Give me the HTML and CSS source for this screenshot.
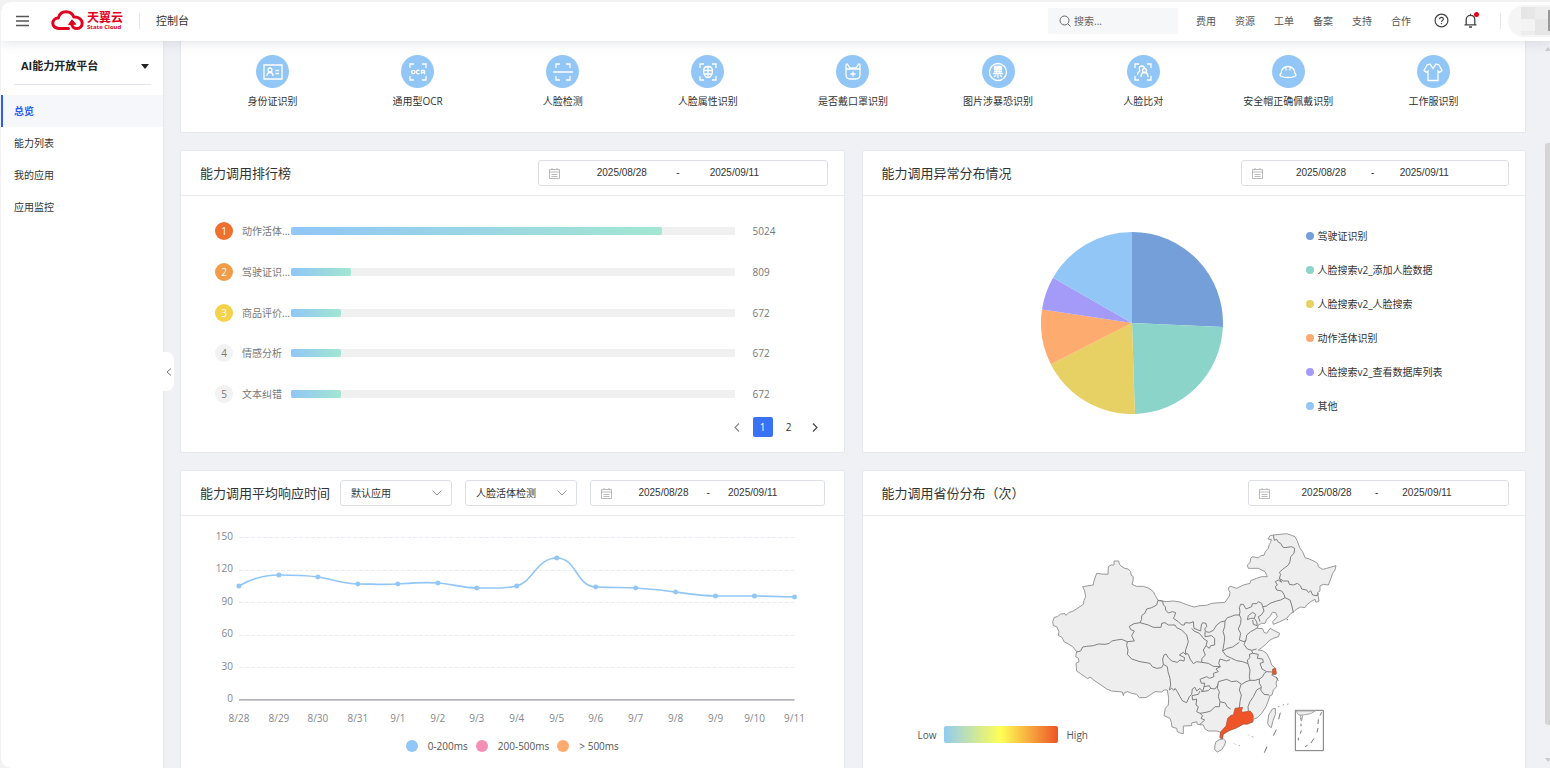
FILE: index.html
```
<!DOCTYPE html>
<html lang="zh-CN">
<head>
    <meta charset="UTF-8">
    <meta name="viewport" content="width=device-width, initial-scale=1.0">
    <title>AI能力开放平台 - 总览</title>
    <link rel="stylesheet" href="styles.css">
</head>
<body>
    <div class="app">
        <header class="header">
            <button class="menu-btn" aria-label="菜单">
                <svg width="13" height="12" viewBox="0 0 13 12" stroke="#555" stroke-width="1.6"><path d="M0 1.500h13M0 6h13M0 10.500h13"/></svg>
            </button>
            <a class="logo" href="#">
                <svg width="33" height="21" viewBox="0 0 33 21" fill="none" stroke="#e2001f" stroke-width="3" stroke-linecap="round" stroke-linejoin="round">
                    <path d="M17.500 18.500H8C4.500 18.500 1.800 16.300 1.800 13.300c0-3 2.300-5 5.400-5.200C8.300 4.200 11.400 1.800 15 1.800c3.800 0 6.600 2 7.800 5.300 4.800-.3 8.400 2.300 8.400 6.200 0 3-2.200 5.200-5.200 5.200-3 0-5.200-1.700-5.200-4.700"/>
                    <path d="M17.800 14.200l3.200-4.400 3.500 4.200z" fill="#e2001f" stroke-width="1"/>
                </svg>
                <span class="logo-text">
                    <span class="logo-cn">天翼云</span>
                    <span class="logo-en">State Cloud</span>
                </span>
            </a>
            <span class="divider"></span>
            <a class="console" href="#">控制台</a>
            <label class="search">
                <svg width="12" height="12" viewBox="0 0 12 12" fill="none" stroke="#666"><circle cx="5.500" cy="5.500" r="4.500"/><path d="M9 9l2.500 2.500"/></svg>
                <input type="text" placeholder="搜索..." aria-label="搜索">
            </label>
            <nav class="top-nav">
                <a href="#">费用</a>
                <a href="#">资源</a>
                <a href="#">工单</a>
                <a href="#">备案</a>
                <a href="#">支持</a>
                <a href="#">合作</a>
            </nav>
            <button class="icon-btn" aria-label="帮助">
                <svg width="15" height="15" viewBox="0 0 15 15" fill="none" stroke="#444" stroke-width="1.2"><circle cx="7.500" cy="7.500" r="6.400"/><path d="M5.600 6.200c0-1.200.8-1.900 1.900-1.900s1.900.7 1.900 1.700c0 1.400-1.900 1.400-1.900 2.900M7.500 10v1.200"/></svg>
            </button>
            <button class="icon-btn bell" aria-label="消息">
                <svg width="15" height="15" viewBox="0 0 15 15" fill="none" stroke="#444" stroke-width="1.300"><path d="M1.500 11.800h12M3.200 11.800V6.700c0-2.500 1.800-4.300 4.300-4.300s4.300 1.800 4.300 4.300v5.100M7.500 2.400V.8M6 14h3"/></svg>
                <span class="badge"></span>
            </button>
            <span class="divider"></span>
            <div class="avatar">
                <svg width="42" height="32" viewBox="0 0 42 32"><path d="M13 2h29v28H13z" fill="#ededed"/><path d="M13 2h14v12H13zM27 14h15v16H27z" fill="#e6e6e6"/><path d="M13 14h14v12H13z" fill="#f3f3f3"/><path d="M40 5h2v21h-2z" fill="#999"/></svg>
            </div>
        </header>

        <div class="body">
            <aside class="sidebar">
                <button class="product">
                    <span>AI能力开放平台</span>
                    <svg width="8" height="5" viewBox="0 0 8 5"><path d="M0 0h8L4 5z" fill="#222"/></svg>
                </button>
                <nav class="side-nav">
                    <a class="active" href="#">总览</a>
                    <a href="#">能力列表</a>
                    <a href="#">我的应用</a>
                    <a href="#">应用监控</a>
                </nav>
                <button class="collapse" aria-label="收起">
                    <svg width="6" height="8" viewBox="0 0 6 8" fill="none" stroke="#777"><path d="M5 .5L1 4l4 3.500"/></svg>
                </button>
            </aside>

            <main class="main">
                <section class="card services">
                    <a class="service" href="#">
                        <span class="service-icon"><svg viewBox="0 0 20 20"><path d="M1 3h18v14H1zM12.500 8.500H16M12.500 11.500H16M4 14c0-2.500 1-3.500 3-3.500s3 1 3 3.500"/><circle cx="7" cy="8" r="2"/></svg></span>
                        <span>身份证识别</span>
                    </a>
                    <a class="service" href="#">
                        <span class="service-icon"><svg viewBox="0 0 20 20"><path d="M2 6V2h4M14 2h4v4M18 14v4h-4M6 18H2v-4"/><circle cx="5.300" cy="10" r="1.700"/><path d="M11.500 8.600c-2-1-3 0-3 1.400s1 2.400 3 1.400M13.500 12V8.300h2c1.500 0 1.500 2 0 2h-2M15.500 10.300l1.500 1.700"/></svg></span>
                        <span>通用型OCR</span>
                    </a>
                    <a class="service" href="#">
                        <span class="service-icon"><svg viewBox="0 0 20 20"><path d="M3 6V2h4M13 2h4v4M17 14v4h-4M7 18H3v-4M0 10h20"/></svg></span>
                        <span>人脸检测</span>
                    </a>
                    <a class="service" href="#">
                        <span class="service-icon"><svg viewBox="0 0 20 20"><path d="M2 6V2h4M14 2h4v4M18 14v4h-4M6 18H2v-4M10 4.500c3 0 4.500 1.500 4.500 4.500 0 3.500-2 6.500-4.500 6.500S5.500 12.500 5.500 9c0-3 1.500-4.500 4.500-4.500zM10 4.500v11M5.500 8.500h9M6 12h8"/></svg></span>
                        <span>人脸属性识别</span>
                    </a>
                    <a class="service" href="#">
                        <span class="service-icon"><svg viewBox="0 0 20 20"><path d="M3 7V4c0-2.500 1-2.500 2-1l2 3h6l2-3c1-1.500 2-1.500 2 1v3M3 7h14v5.500c0 3-1.500 4.500-4 4.500H7c-2.500 0-4-1.500-4-4.500zM10 9.500v5M7.500 12h5"/></svg></span>
                        <span>是否戴口罩识别</span>
                    </a>
                    <a class="service" href="#">
                        <span class="service-icon"><svg viewBox="0 0 20 20"><circle cx="10" cy="10" r="8.500"/><path d="M6.500 4.500h7v3h-7zM6.500 6h7M6 9.500h8M5 11.500h10M8.500 8v4M11.500 8v4M10 12v4M6 15l2-2M14 15l-2-2"/></svg></span>
                        <span>图片涉暴恐识别</span>
                    </a>
                    <a class="service" href="#">
                        <span class="service-icon"><svg viewBox="0 0 20 20"><path d="M2 6V2h4M14 2h4v4M18 14v4h-4M6 18H2v-4M4.500 13c0-2.500 1-3.500 2.500-4M8 15c0-3 1-4.500 3.500-4.500s3.500 1.500 3.500 4.500M7 9C5 6 7 4 8.500 4s3 1 3 2.500"/><circle cx="11.500" cy="8.500" r="2"/></svg></span>
                        <span>人脸比对</span>
                    </a>
                    <a class="service" href="#">
                        <span class="service-icon"><svg viewBox="0 0 20 20"><path d="M3 11.500C3 7.500 6 4.500 10 4.500s7 3 7 7c3 2-1 4-7 4s-10-2-7-4zM8 5v3.500M12 5v3.500"/></svg></span>
                        <span>安全帽正确佩戴识别</span>
                    </a>
                    <a class="service" href="#">
                        <span class="service-icon"><svg viewBox="0 0 20 20"><path d="M7 2L4 3 1 8.500l2.500 2L5 9v9.500h10V9l1.500 1.500 2.500-2L16 3l-3-1-3 4.500z"/></svg></span>
                        <span>工作服识别</span>
                    </a>
                </section>

                <div class="grid">
                    <section class="card">
                        <div class="card-head">
                            <h2>能力调用排行榜</h2>
                            <div class="date-range wide">
                                <svg class="cal" viewBox="0 0 11 11"><path d="M.5 1.500h10v9H.5zM.5 4h10M3 0v2M8 0v2M2.500 6.500h6M2.500 8.500h6"/></svg>
                                <input type="text" value="2025/08/28" aria-label="开始日期">
                                <span>-</span>
                                <input type="text" value="2025/09/11" aria-label="结束日期">
                            </div>
                        </div>
                        <ol class="rank">
                            <li><span class="num n1">1</span><span class="name">动作活体...</span><div class="bar"><div class="fill" style="width: 83.6%"></div></div><span class="value">5024</span></li>
                            <li><span class="num n2">2</span><span class="name">驾驶证识...</span><div class="bar"><div class="fill" style="width: 13.6%"></div></div><span class="value">809</span></li>
                            <li><span class="num n3">3</span><span class="name">商品评价...</span><div class="bar"><div class="fill" style="width: 11.3%"></div></div><span class="value">672</span></li>
                            <li><span class="num">4</span><span class="name">情感分析</span><div class="bar"><div class="fill" style="width: 11.3%"></div></div><span class="value">672</span></li>
                            <li><span class="num">5</span><span class="name">文本纠错</span><div class="bar"><div class="fill" style="width: 11.3%"></div></div><span class="value">672</span></li>
                        </ol>
                        <div class="pager">
                            <button aria-label="上一页"><svg width="6" height="9" viewBox="0 0 6 9" fill="none" stroke="#888" stroke-width="1.200"><path d="M5 .5l-4 4 4 4"/></svg></button>
                            <button class="current">1</button>
                            <button>2</button>
                            <button aria-label="下一页"><svg width="6" height="9" viewBox="0 0 6 9" fill="none" stroke="#444" stroke-width="1.200"><path d="M1 .5l4 4-4 4"/></svg></button>
                        </div>
                    </section>

                    <section class="card">
                        <div class="card-head">
                            <h2>能力调用异常分布情况</h2>
                            <div class="date-range medium">
                                <svg class="cal" viewBox="0 0 11 11"><path d="M.5 1.500h10v9H.5zM.5 4h10M3 0v2M8 0v2M2.500 6.500h6M2.500 8.500h6"/></svg>
                                <input type="text" value="2025/08/28" aria-label="开始日期">
                                <span>-</span>
                                <input type="text" value="2025/09/11" aria-label="结束日期">
                            </div>
                        </div>
                        <div class="pie-box">
                            <svg class="pie" viewBox="-91 -91 182 182">
                                <path fill="#759fd9" d="M0 0V-91A91 91 0 0 1 90.900 4z"/>
                                <path fill="#8bd4c9" d="M0 0L90.900 4A91 91 0 0 1 2.900 91z"/>
                                <path fill="#e7d064" d="M0 0L2.900 91A91 91 0 0 1 -81.200 41.200z"/>
                                <path fill="#fdab6f" d="M0 0L-81.200 41.200A91 91 0 0 1 -90 -13.500z"/>
                                <path fill="#a49bf8" d="M0 0L-90 -13.500A91 91 0 0 1 -79 -45.200z"/>
                                <path fill="#91c6f6" d="M0 0L-79 -45.200A91 91 0 0 1 0 -91z"/>
                            </svg>
                            <ul class="pie-legend">
                                <li><i class="dot c-blue"></i>驾驶证识别</li>
                                <li><i class="dot c-green"></i>人脸搜索v2_添加人脸数据</li>
                                <li><i class="dot c-yellow"></i>人脸搜索v2_人脸搜索</li>
                                <li><i class="dot c-orange"></i>动作活体识别</li>
                                <li><i class="dot c-purple"></i>人脸搜索v2_查看数据库列表</li>
                                <li><i class="dot c-sky"></i>其他</li>
                            </ul>
                        </div>
                    </section>

                    <section class="card">
                        <div class="card-head filters">
                            <h2>能力调用平均响应时间</h2>
                            <div class="select">
                                <select aria-label="应用"><option>默认应用</option></select>
                                <svg width="10" height="6" viewBox="0 0 10 6" fill="none" stroke="#999"><path d="M.5 .5L5 5l4.500-4.500"/></svg>
                            </div>
                            <div class="select">
                                <select aria-label="能力"><option>人脸活体检测</option></select>
                                <svg width="10" height="6" viewBox="0 0 10 6" fill="none" stroke="#999"><path d="M.5 .5L5 5l4.500-4.500"/></svg>
                            </div>
                            <div class="date-range grow">
                                <svg class="cal" viewBox="0 0 11 11"><path d="M.5 1.500h10v9H.5zM.5 4h10M3 0v2M8 0v2M2.500 6.500h6M2.500 8.500h6"/></svg>
                                <input type="text" value="2025/08/28" aria-label="开始日期">
                                <span>-</span>
                                <input type="text" value="2025/09/11" aria-label="结束日期">
                            </div>
                        </div>
                        <svg class="line-chart" viewBox="0 0 663 214">
                            <path class="grid-line" d="M58 21.500h556M58 54.500h556M58 86.500h556M58 119.500h556M58 151.500h556"/>
                            <path class="axis" d="M58 184h556"/>
                            <g class="y-labels">
                                <text x="52" y="24">150</text>
                                <text x="52" y="56">120</text>
                                <text x="52" y="89">90</text>
                                <text x="52" y="121">60</text>
                                <text x="52" y="154">30</text>
                                <text x="52" y="186">0</text>
                            </g>
                            <g class="x-labels">
                                <text x="58" y="206">8/28</text>
                                <text x="98" y="206">8/29</text>
                                <text x="137" y="206">8/30</text>
                                <text x="177" y="206">8/31</text>
                                <text x="217" y="206">9/1</text>
                                <text x="257" y="206">9/2</text>
                                <text x="296" y="206">9/3</text>
                                <text x="336" y="206">9/4</text>
                                <text x="376" y="206">9/5</text>
                                <text x="415" y="206">9/6</text>
                                <text x="455" y="206">9/7</text>
                                <text x="495" y="206">9/8</text>
                                <text x="535" y="206">9/9</text>
                                <text x="574" y="206">9/10</text>
                                <text x="614" y="206">9/11</text>
                            </g>
                            <path class="series" d="M58 70C72 62 84 59 98 59S123 59 137 61S163 68 177 68S203 69 217 68S243 66 257 67S282 72 296 72S326 73 336 70C352 66 356 42 376 42S395 70 415 71S441 71 455 72S481 74 495 76S521 80 535 80S560 80 574 80L614 81"/>
                            <g class="points">
                                <circle cx="58" cy="70" r="2.500"/><circle cx="98" cy="59" r="2.500"/><circle cx="137" cy="61" r="2.500"/>
                                <circle cx="177" cy="68" r="2.500"/><circle cx="217" cy="68" r="2.500"/><circle cx="257" cy="67" r="2.500"/>
                                <circle cx="296" cy="72" r="2.500"/><circle cx="336" cy="70" r="2.500"/><circle cx="376" cy="42" r="2.500"/>
                                <circle cx="415" cy="71" r="2.500"/><circle cx="455" cy="72" r="2.500"/><circle cx="495" cy="76" r="2.500"/>
                                <circle cx="535" cy="80" r="2.500"/><circle cx="574" cy="80" r="2.500"/><circle cx="614" cy="81" r="2.500"/>
                            </g>
                        </svg>
                        <ul class="line-legend">
                            <li><i class="dot c-sky"></i>0-200ms</li>
                            <li><i class="dot c-pink"></i>200-500ms</li>
                            <li><i class="dot c-orange"></i>&gt; 500ms</li>
                        </ul>
                    </section>

                    <section class="card">
                        <div class="card-head">
                            <h2>能力调用省份分布（次）</h2>
                            <div class="date-range small">
                                <svg class="cal" viewBox="0 0 11 11"><path d="M.5 1.500h10v9H.5zM.5 4h10M3 0v2M8 0v2M2.500 6.500h6M2.500 8.500h6"/></svg>
                                <input type="text" value="2025/08/28" aria-label="开始日期">
                                <span>-</span>
                                <input type="text" value="2025/09/11" aria-label="结束日期">
                            </div>
                        </div>
                        <div class="map-box">
                            <svg class="map" viewBox="0 0 930 705">
                                <!-- country outline -->
                                <path class="land" d="M38 290L43 277 52 275 62 267 75 266 78 271 86 263 100 258 130 238 132 226 137 215 134 198 128 185 160 180 161 171 170 145 185 147 204 148 205 125 213 120 222 120 222 108 236 108 238 117 243 123 254 130 265 132 272 140 273 150 280 155 279 168 276 178 290 184 310 184 327 190 340 200 346 212 354 226 378 230 400 228 420 231 440 239 462 246 480 242 500 241 515 235 555 232 568 213 570 202 565 194 567 186 572 184 590 190 610 180 630 175 632 167 650 160 665 155 682 155 675 140 655 130 625 130 622 120 630 113 632 100 638 95 655 99 662 92 672 91 676 80 685 70 688 58 692 52 694 44 684 42 690 32 700 30 740 26 755 31 765 35 772 48 779 68 788 80 795 98 810 103 825 110 833 116 835 125 848 133 860 130 888 122 885 135 878 145 872 162 865 180 850 178 840 183 840 198 832 203 835 215 837 228 828 232 825 223 812 230 800 240 795 248 782 246 770 252 762 260 752 266 740 280 720 290 700 298 698 290 712 275 707 263 697 262 690 275 680 283 675 295 665 295 655 300 652 310 668 311 672 322 680 325 685 318 690 310 705 318 719 325 715 335 700 340 690 345 675 360 665 368 655 375 668 377 680 385 690 405 695 420 707 430 708 448 695 450 713 460 708 475 710 485 700 495 696 510 690 512 684 530 678 545 665 565 652 578 640 583 638 592 610 597 590 608 570 615 548 628 547 642 540 638 542 622 530 618 505 618 495 612 490 600 472 598 470 590 455 594 455 602 430 603 430 626 420 624 412 620 410 610 396 606 394 592 390 580 372 572 376 550 385 540 386 520 382 495 372 495 365 501 345 500 330 510 318 518 298 518 290 508 275 505 263 500 253 503 250 512 247 501 215 498 200 492 180 478 165 468 150 456 143 461 110 438 108 415 117 410 115 400 107 395 110 380 98 365 85 357 72 350 66 337 55 331 57 320 50 305 40 302z"/>
                                <!-- province borders -->
                                <g class="border">
                                    <path d="M354 226L350 240 335 248 320 252 315 264 305 272 305 283 300 293 282 296 268 304 272 314 283 318 275 332 283 348 262 350 245 343 230 345 215 348 208 355 195 358 175 357 160 362 140 364 128 366 122 378 110 381"/>
                                    <path d="M262 350L260 362 264 375 262 388 275 402 300 410 330 415 337 425 350 430 365 428 370 418 382 425 384 440 390 460 392 480 388 495M370 418L368 402 372 390 378 387 385 398 395 408 412 412 420 405 432 408 434 398 418 390 430 382 438 390 436 378 445 350 440 330 425 315 410 308 405 300 395 300 385 300 375 293 365 295 363 307 340 307 325 300 300 293"/>
                                    <path d="M354 226L368 228 370 240 376 245 377 255 385 264 397 260 407 263 403 275 400 280 415 290 425 300 433 300 435 293 450 294 460 290 462 310 482 318 484 300 488 293 498 295 500 305 494 312 497 320 508 322 520 316 530 300 542 291 555 288 562 278 572 275 585 270 598 270 600 260 598 248 602 238 610 238 618 252 635 245 637 236 650 236 655 230 665 235 668 245 680 243 690 235 710 228 722 225 735 218 732 208 725 198 710 195 706 185 712 180 706 170 715 165 725 172 718 160 722 148 718 142 728 133 745 120 750 110 752 95 762 85 764 70 755 65 735 68 728 66 722 55 715 52 710 43 703 46 700 30"/>
                                    <path d="M718 160L730 168 745 168 748 178 760 180 772 175 782 183 785 192 800 195 806 203 812 197 818 210 832 212 836 205M735 218L750 225 755 240 760 262M668 245L672 258 664 270 655 275 660 290"/>
                                    <path d="M625 272L638 262 647 268 643 280 632 280 622 284zM643 280L650 290 652 302 640 298 638 285"/>
                                    <path d="M598 270L603 280 602 295 595 312 602 325 598 345 612 350 618 345 620 330 632 320 645 313 652 308M555 288L554 305 549 320 554 335 553 350 548 378 562 370 578 366 598 352M618 345L612 358 622 372 635 376 650 372"/>
                                    <path d="M548 378L558 392 575 400 590 407 608 410 624 416 630 435 628 455 630 466M635 376L638 385 628 388 630 398 622 405 624 416M638 385L655 388 652 400 668 402 670 412 660 415 666 432 680 440 697 441"/>
                                    <path d="M630 466L645 466 658 462 668 455 672 446 680 440M630 466L618 470 605 478 590 468 575 470 560 463 535 470M658 462L658 475 664 485 662 495 672 508 688 510M662 488L650 495 640 515 630 530 624 545 625 558"/>
                                    <path d="M603 478L598 495 604 510 600 530 598 550M535 470L532 490 538 500 535 515 540 530 556 534 562 546 572 552"/>
                                    <path d="M540 402L536 415 541 425 528 432 535 440 520 445 522 455 508 460 500 455 480 463 484 475 494 474 492 485 508 482 512 490 525 492 535 478M540 402L560 408 570 404M485 412L505 415 520 424 541 425"/>
                                    <path d="M388 495L395 490 402 496 405 490 412 500 420 515 428 528 440 533 448 515 455 508 457 492 465 487 470 498 480 490 488 500 492 485M480 498L475 508 456 512 458 525 470 522 468 540 475 545 470 560 480 565 498 562 512 558 525 545 538 545 540 530"/>
                                    <path d="M484 500L505 497 512 490M480 565L488 572 483 580 494 585 480 598M495 320L495 335 515 332 524 340 524 360 512 362 508 370 498 362 502 348 492 342 478 325 462 318 455 310M498 362L490 375 496 390 486 400 485 412 470 410 460 416 450 402 445 388 438 384"/>
                                </g>
                                <path class="hot" d="M585 550L608 547 605 556 606 562 630 558 638 566 640 575 638 590 622 598 610 597 590 608 565 618 550 628 547 642 540 638 542 620 558 603 563 580 573 571 580 570zM698 432L706 430 709 446 697 448z"/>
                                <path class="land" d="M525 660L528 650 538 644 550 642 557 648 554 660 545 674 532 681 524 674zM683 595L686 570 697 552 706 550 706 568 698 590 694 608 688 604z"/>
                                <g class="sea">
                                    <path d="M721 563l-5 20M709 614l-9 18M681 665l-8 18M708 455l7 12M625 629l2 2M636 634l3 3M583 656l2 2M597 661l2 1M715 545h3M728 540l3-1M742 538l3-1M740 285l4-2"/>
                                    <path class="frame" d="M766 556h84v121h-84z"/>
                                    <path d="M845 562l-5 10M835 583l-1 14M834 609l-3 13M822 640l-9 14M803 660l-8 6M782 578l2 10M783 596v8M784 616l-3 10M775 638v8"/>
                                    <path class="land" d="M768 558l8 12 14 0 22-4 14-8zM780 572l8 0 -2 12z"/>
                                </g>
                            </svg>
                            <div class="visual-map"><span>Low</span><i></i><span>High</span></div>
                        </div>
                    </section>
                </div>
            </main>
            <div class="scrollbar"><span class="up"></span><span class="thumb"></span><span class="down"></span></div>
        </div>
    </div>
</body>
</html>
```
FILE: styles.css
```
* {
    margin: 0;
    padding: 0;
    box-sizing: border-box;
}
body {
    font-family: "Open Sans", "Noto Sans CJK SC", sans-serif;
    font-size: 10px;
    line-height: 14px;
    color: #333;
    background: #f2f2f2;
    height: 100vh;
    padding: 2px 0 0 1px;
    overflow: hidden;
}
a {
    color: inherit;
    text-decoration: none;
}
ul, ol {
    list-style: none;
}
button, input, select {
    font: inherit;
    color: inherit;
    border: none;
    background: none;
    outline: none;
}
button {
    cursor: pointer;
}
svg {
    display: block;
    flex-shrink: 0;
}
.app {
    height: 100%;
    display: flex;
    flex-direction: column;
    background: #eff1f5;
    border-radius: 10px 0 0 10px;
    overflow: hidden;
}

/* header */
.header {
    position: relative;
    z-index: 2;
    display: flex;
    align-items: center;
    height: 39px;
    flex-shrink: 0;
    padding: 0 0 2px 15px;
    background: #fff;
    box-shadow: 0 1px 12px rgba(90, 100, 130, 0.2);
}
.logo {
    display: flex;
    align-items: center;
    gap: 3px;
    margin: 0 16px 0 22px;
}
.logo-text {
    display: flex;
    flex-direction: column;
    color: #e2001f;
    font-weight: bold;
}
.logo-cn {
    font-size: 12px;
    line-height: 13px;
}
.logo-en {
    font-family: "Open Sans", sans-serif;
    font-size: 6px;
    line-height: 7px;
}
.divider {
    width: 1px;
    height: 16px;
    background: #e6e7ea;
}
.console {
    margin-left: 16px;
    font-size: 11px;
}
.search {
    display: flex;
    align-items: center;
    gap: 3px;
    width: 130px;
    height: 26px;
    margin-left: auto;
    padding: 0 11px;
    background: #f6f7f9;
    border-radius: 2px;
}
.search input {
    width: 80px;
}
.search input::placeholder {
    color: #666;
}
.top-nav {
    display: flex;
    gap: 19px;
    margin: 0 23px 0 18px;
    color: #555;
}
.icon-btn {
    position: relative;
    margin-right: 14px;
}
.bell {
    margin-right: 22px;
}
.badge {
    position: absolute;
    top: -1px;
    right: -1px;
    width: 5px;
    height: 5px;
    border-radius: 50%;
    background: #e2001f;
}
.avatar {
    width: 42px;
    height: 32px;
    margin-left: 7px;
    background: #f5f5f5;
    border-radius: 16px 0 0 16px;
    overflow: hidden;
}

/* layout */
.body {
    position: relative;
    display: flex;
    flex: 1;
    min-height: 0;
}
.sidebar {
    position: relative;
    width: 162px;
    flex-shrink: 0;
    background: #fff;
    box-shadow: 0 0 3px rgba(0, 0, 0, 0.08);
}
.product {
    display: flex;
    align-items: center;
    justify-content: space-between;
    width: 137px;
    height: 44px;
    margin: 0 0 10px 13px;
    padding: 7px 2px 0 7px;
    border-bottom: 1px solid #e3e5ed;
    color: #222;
    font-size: 11px;
    font-weight: bold;
}
.side-nav a {
    display: flex;
    align-items: center;
    height: 32px;
    padding-left: 11px;
    border-left: 2px solid transparent;
}
.side-nav .active {
    color: #2f5cf4;
    font-weight: bold;
    background: #f6f7fb;
    border-left-color: #2f5cf4;
}
.collapse {
    position: absolute;
    left: 100%;
    top: 311px;
    display: flex;
    align-items: center;
    justify-content: center;
    width: 11px;
    height: 39px;
    background: #fff;
    border-radius: 0 8px 8px 0;
}
.main {
    flex: 1;
    min-width: 0;
    padding: 0 24px 17px 17px;
    overflow: hidden;
}
.card {
    background: #fff;
    border: 1px solid #e4e7ed;
    border-radius: 2px;
    overflow: hidden;
}
.services {
    display: flex;
    height: 92px;
    margin-bottom: 17px;
    padding: 14px 19px 0;
    border-top: none;
    border-radius: 0 0 2px 2px;
}
.service {
    flex: 1;
    display: flex;
    flex-direction: column;
    align-items: center;
    gap: 6px;
    white-space: nowrap;
}
.service-icon {
    display: flex;
    align-items: center;
    justify-content: center;
    width: 33px;
    height: 33px;
    border-radius: 50%;
    background: #91c6f6;
}
.service-icon svg {
    width: 20px;
    height: 20px;
    fill: none;
    stroke: #fff;
    stroke-width: 1.3;
}
.grid {
    display: grid;
    grid-template-columns: 1fr 1fr;
    grid-auto-rows: 303px;
    gap: 17px;
}
.card-head {
    display: flex;
    align-items: center;
    justify-content: space-between;
    height: 45px;
    padding: 0 16px 0 19px;
    border-bottom: 1px solid #e8eaf0;
}
.card-head h2 {
    font-size: 13px;
    font-weight: normal;
    white-space: nowrap;
}
.filters {
    gap: 13px;
    padding-right: 19px;
}
.filters h2 {
    margin-right: -3px;
}

/* form controls */
.date-range {
    display: flex;
    align-items: center;
    height: 26px;
    padding: 0 10px;
    border: 1px solid #dcdfe6;
    border-radius: 3px;
    font-family: "Liberation Sans", sans-serif;
    flex-shrink: 0;
}
.date-range input {
    width: 39%;
    min-width: 0;
    text-align: center;
}
.date-range span {
    width: 3%;
    text-align: center;
}
.cal {
    width: 11px;
    height: 11px;
    margin-right: 10px;
    fill: none;
    stroke: #aaa;
    stroke-width: 0.8;
}
.wide {
    width: 290px;
}
.medium {
    width: 268px;
}
.small {
    width: 261px;
}
.grow {
    flex: 1;
}
.select {
    position: relative;
    width: 112px;
    flex-shrink: 0;
}
.select select {
    width: 100%;
    height: 26px;
    padding: 0 24px 0 10px;
    border: 1px solid #dcdfe6;
    border-radius: 3px;
    appearance: none;
}
.select svg {
    position: absolute;
    right: 10px;
    top: 10px;
    pointer-events: none;
}

/* ranking */
.rank {
    display: flex;
    flex-direction: column;
    justify-content: space-between;
    height: 181px;
    margin: 26px 48px 14px 34px;
    color: #777;
}
.rank li {
    display: flex;
    align-items: center;
    height: 18px;
}
.num {
    width: 18px;
    height: 18px;
    margin-right: 9px;
    border-radius: 50%;
    background: #f2f2f2;
    text-align: center;
    line-height: 18px;
}
.n1, .n2, .n3 {
    color: #fff;
}
.n1 {
    background: #ed702d;
}
.n2 {
    background: #f09c48;
}
.n3 {
    background: #f6d14a;
}
.name {
    width: 49px;
    white-space: nowrap;
}
.bar {
    flex: 1;
    height: 8px;
    background: #f0f0f0;
    border-radius: 1px;
}
.fill {
    height: 100%;
    border-radius: 2px;
    background: linear-gradient(to right, #91c6f6, #a3e6d2);
}
.value {
    width: 61px;
    padding-left: 18px;
}
.pager {
    display: flex;
    justify-content: flex-end;
    gap: 6px;
    padding-right: 19px;
}
.pager button {
    display: flex;
    align-items: center;
    justify-content: center;
    width: 20px;
    height: 20px;
    border-radius: 2px;
}
.pager .current {
    color: #fff;
    background: #3a72f6;
}

/* pie */
.pie-box {
    display: flex;
    align-items: center;
    gap: 83px;
    padding: 23px 0 0 178px;
}
.pie {
    width: 182px;
    height: 182px;
    margin-top: 4px;
}
.pie-legend li {
    display: flex;
    align-items: center;
    gap: 4px;
    height: 34px;
    white-space: nowrap;
}
.dot {
    width: 8px;
    height: 8px;
    border-radius: 50%;
}
.c-blue {
    background: #759fd9;
}
.c-green {
    background: #8bd4c9;
}
.c-yellow {
    background: #e7d064;
}
.c-orange {
    background: #fdab6f;
}
.c-purple {
    background: #a49bf8;
}
.c-sky {
    background: #91c6f6;
}
.c-pink {
    background: #f58fb4;
}

/* line chart */
.line-chart {
    width: 100%;
}
.line-chart text {
    font-size: 10px;
    fill: #85878d;
}
.y-labels {
    text-anchor: end;
}
.x-labels {
    text-anchor: middle;
}
.grid-line {
    stroke: #e9ebf2;
    stroke-dasharray: 4 2;
}
.axis {
    stroke: #9a9ca5;
    stroke-width: 1.4;
}
.series {
    fill: none;
    stroke: #91c6f6;
    stroke-width: 1.6;
}
.points {
    fill: #91c6f6;
}
.line-legend {
    display: flex;
    justify-content: center;
    gap: 8px;
    margin-top: 9px;
    color: #555;
}
.line-legend li {
    display: flex;
    align-items: center;
    gap: 10px;
}
.line-legend .dot {
    width: 12px;
    height: 12px;
}

/* map */
.map-box {
    position: relative;
    padding: 9px 0 0 177px;
}
.map {
    width: 310px;
    height: 235px;
}
.land {
    fill: #eee;
    stroke: #999;
    stroke-width: 3;
}
.border {
    fill: none;
    stroke: #808080;
    stroke-width: 3;
}
.hot {
    fill: #ee5427;
    stroke: #a8563c;
    stroke-width: 2;
}
.sea {
    fill: none;
    stroke: #777;
    stroke-width: 3;
}
.sea .land {
    stroke: #aaa;
}
.visual-map {
    position: absolute;
    left: 55px;
    bottom: 17px;
    display: flex;
    align-items: center;
    gap: 8px;
    color: #555;
}
.visual-map i {
    width: 114px;
    height: 17px;
    border-radius: 2px;
    background: linear-gradient(to right, #91cbf2, #ffff55, #ee5427);
}

/* scrollbar */
.scrollbar {
    position: absolute;
    right: 0;
    top: 0;
    bottom: 0;
    width: 5px;
    display: flex;
    flex-direction: column;
    padding: 6px 0;
}
.thumb {
    flex: 1;
    margin: 92px 0 33px;
    background: #d5d5d6;
    border-radius: 3px 0 0 3px;
}
.up, .down {
    border: 3px solid transparent;
}
.up {
    border-top: none;
    border-bottom: 4px solid #ccc;
}
.down {
    border-bottom: none;
    border-top: 4px solid #ccc;
}
```
